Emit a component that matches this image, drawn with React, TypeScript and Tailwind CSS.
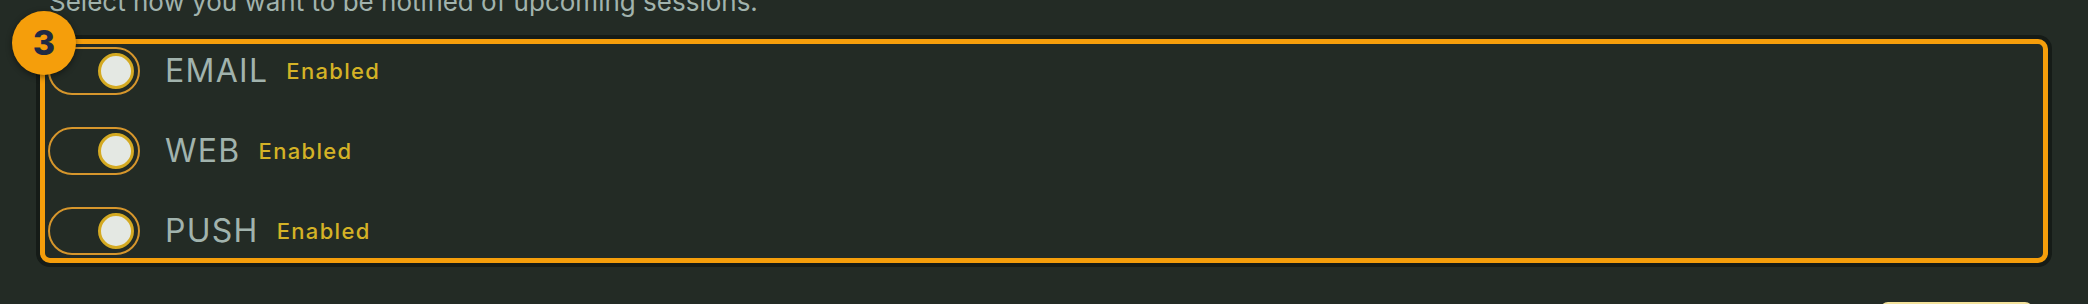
const CHANNELS = [
  { name: 'EMAIL', status: 'Enabled' },
  { name: 'WEB', status: 'Enabled' },
  { name: 'PUSH', status: 'Enabled' },
];

function Toggle() {
  return (
    <div className="w-[92px] h-[48px] rounded-full border-2 border-[#d6962c] flex items-center justify-end pr-[4px] shrink-0">
      <div className="w-[36px] h-[36px] rounded-full bg-[#e4e8e3] border-[3px] border-[#d4aa22]" />
    </div>
  );
}

export default function App() {
  return (
    <div
      className="relative w-[2088px] h-[304px] overflow-hidden bg-[#232b25] pl-[40px]"
      style={{ fontFamily: 'Inter, "Noto Sans", sans-serif' }}
    >
      <p className="-mt-[11px] pl-[9px] text-[26px] leading-[26px] text-[#a1b3ad]">
        Select how you want to be notified of upcoming sessions.
      </p>

      <div className="mt-[24px] w-[2008px] rounded-[10px] border-[5px] border-[#f59e0b] shadow-[0_0_0_4px_#151b17] px-[3px] py-[3px] flex flex-col gap-[32px]">
        {CHANNELS.map((c) => (
          <div key={c.name} className="flex items-center">
            <Toggle />
            <span className="ml-[25px] text-[32px] leading-none tracking-[0.04em] text-[#a1b3ad]">{c.name}</span>
            <span className="ml-[18px] text-[22px] leading-none font-medium tracking-[0.06em] text-[#d4b226]">{c.status}</span>
          </div>
        ))}
      </div>

      <div className="flex justify-end pr-[15px] w-[2008px] mt-[39px]">
        <div className="w-[153px] h-[40px] rounded-lg bg-[#f3e29b]" />
      </div>

      <div className="absolute left-[12px] top-[11px] w-[64px] h-[64px] rounded-full bg-[#f59e0b] shadow-[0_2px_6px_rgba(0,0,0,0.45)] flex items-center justify-center">
        <span className="text-[34px] font-extrabold leading-none text-[#1f2a44]">3</span>
      </div>
    </div>
  );
}
